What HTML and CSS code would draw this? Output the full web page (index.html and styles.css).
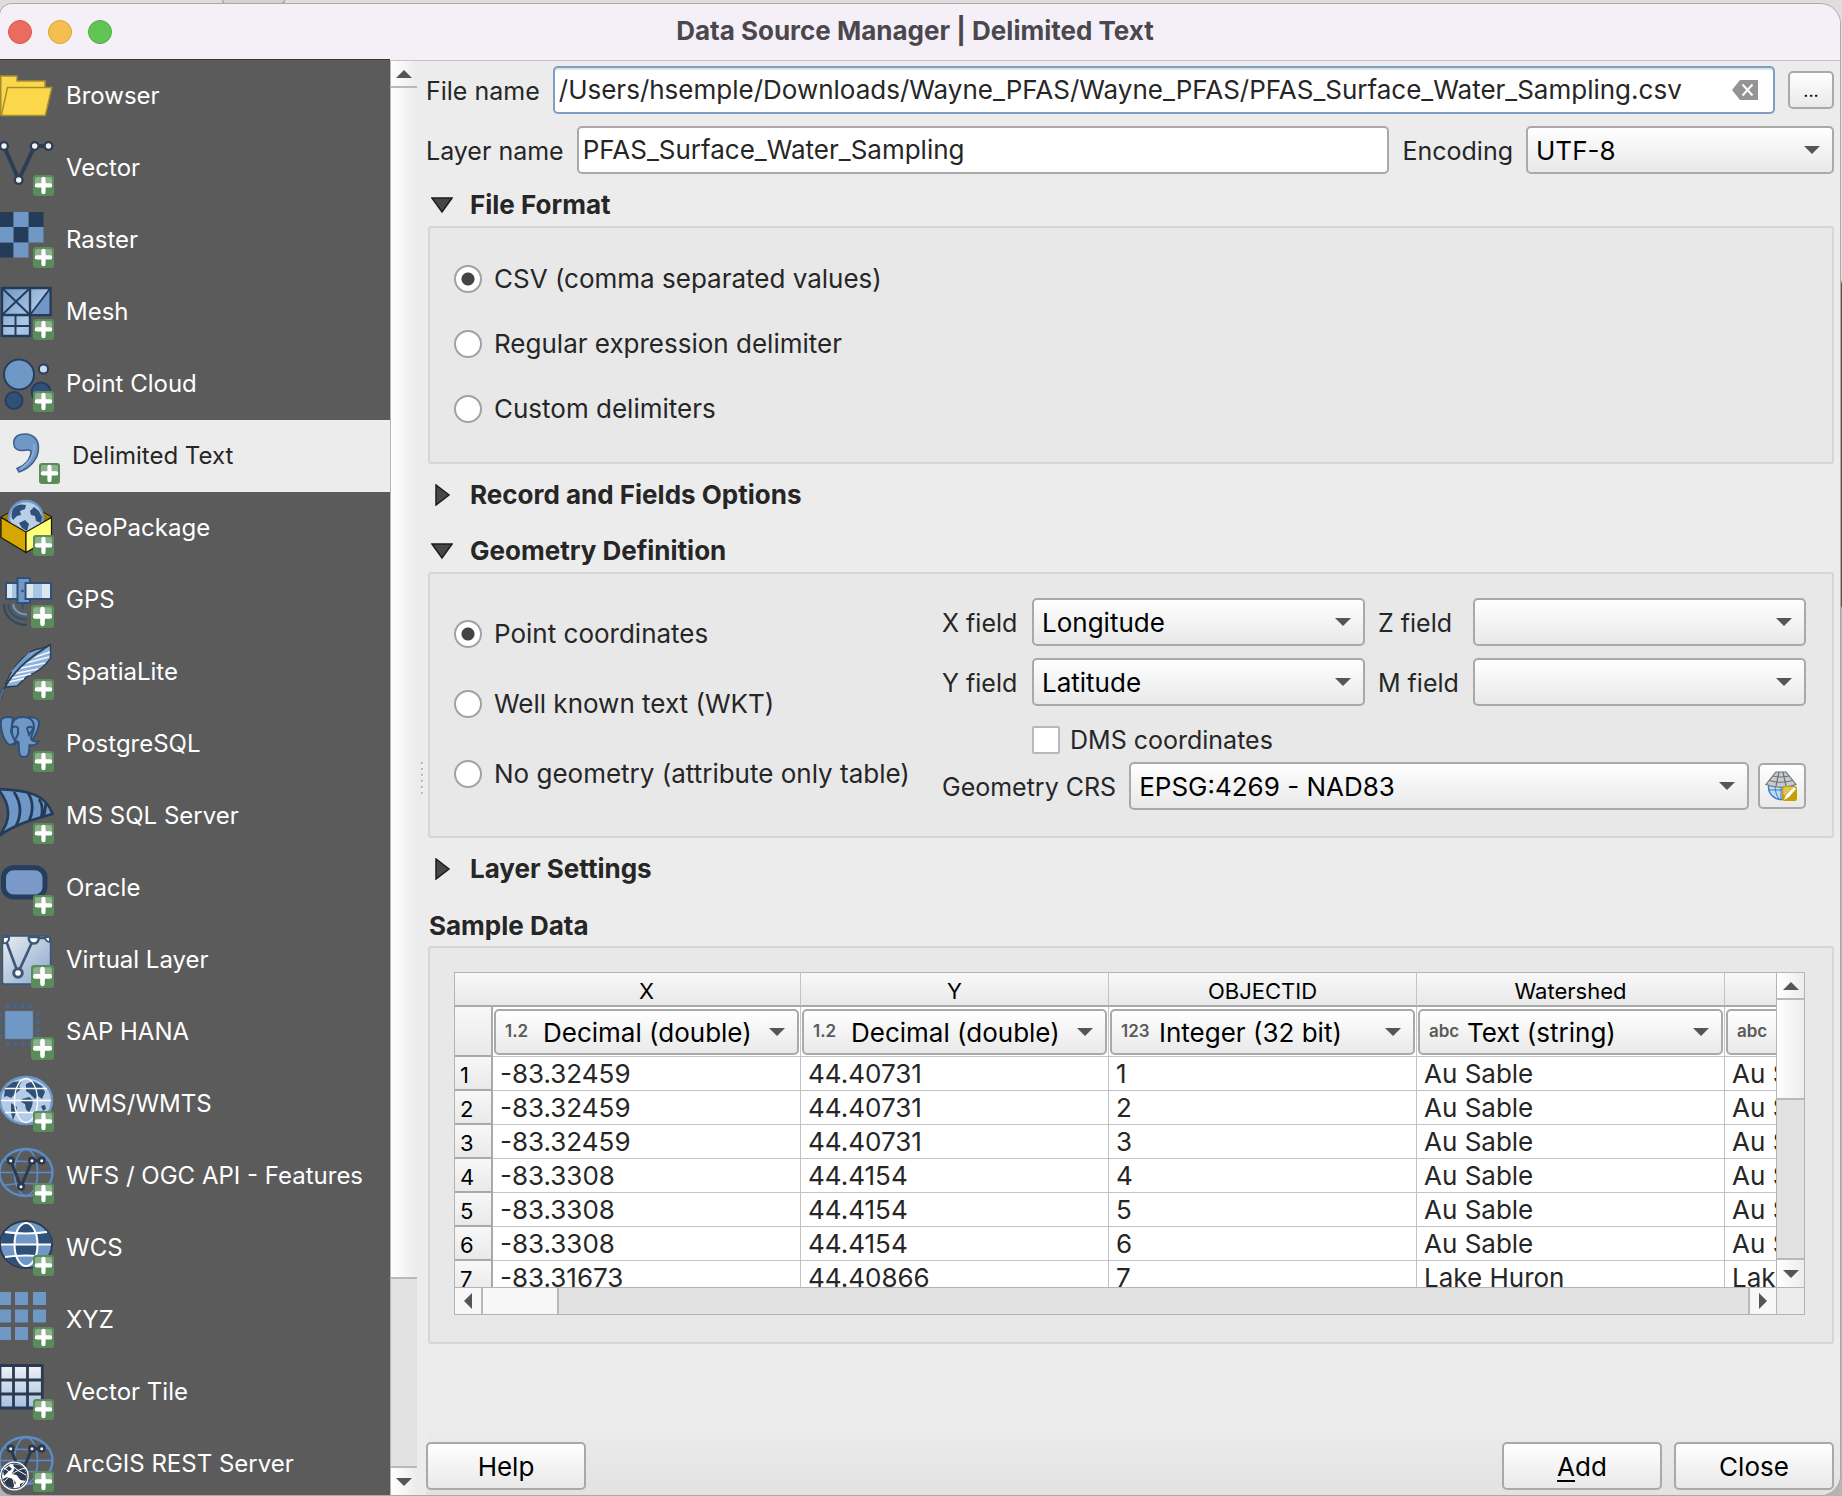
FILE: index.html
```html
<!DOCTYPE html>
<html lang="en">
<head>
<meta charset="utf-8">
<title>Data Source Manager | Delimited Text</title>
<link rel="stylesheet" href="styles.css">
</head>
<body>
<svg class="defs" aria-hidden="true">
  <defs>
    <linearGradient id="sheen" x1="0" y1="0" x2="1" y2="1"><stop offset="0" stop-color="#6f98c6"/><stop offset=".6" stop-color="#adc8e6"/><stop offset="1" stop-color="#8fb0d8"/></linearGradient>
    <linearGradient id="pale" x1="0" y1="0" x2="1" y2="1"><stop offset="0" stop-color="#ededf0"/><stop offset="1" stop-color="#86a6cd"/></linearGradient>
    <linearGradient id="fade" x1="0" y1="0" x2="0" y2="1"><stop offset="0" stop-color="#f2f2f4"/><stop offset="1" stop-color="#a5c1e3"/></linearGradient>
    <symbol id="plus" viewBox="0 0 21 21">
      <rect width="21" height="21" rx="3" fill="#5a8c5a"/>
      <path d="M2 4a2 2 0 0 1 2-2h13a2 2 0 0 1 2 2v5.500H2z" fill="#8fb08f"/>
      <path d="M10.500 3.800v13.400M3.800 10.400h13.400" stroke="#fff" stroke-width="4.200" stroke-linecap="round"/>
    </symbol>
    <symbol id="wire" viewBox="0 0 54 72">
      <g fill="none" stroke="#5a8cc8" stroke-width="1.600">
        <ellipse cx="26" cy="32.500" rx="26.500" ry="23.500" stroke-width="2.400"/>
        <ellipse cx="26" cy="32.500" rx="11.500" ry="23"/>
        <path d="M0 32.500h52M5 20q21 3 42 0M5 45q21-3 42 0"/>
      </g>
      <path d="M10.700 20.700 21 46.700 32 20.700h9.700" fill="none" stroke="#2b3a4e" stroke-width="3"/>
      <g fill="#fff" stroke="#2b3a4e" stroke-width="2.600"><circle cx="10.700" cy="20.700" r="2.800"/><circle cx="32" cy="20.700" r="2.800"/><circle cx="41.700" cy="20.700" r="2.800"/><circle cx="21" cy="46.700" r="2.800"/></g>
    </symbol>
  </defs>
</svg>
<div class="behind"><span class="behind-tab"></span></div>
<div class="window">
  <header class="titlebar">
    <div class="lights"><button class="light close" aria-label="Close window"></button><button class="light minimise" aria-label="Minimise"></button><button class="light zoom" aria-label="Zoom"></button></div>
    <h1>Data Source Manager | Delimited Text</h1>
  </header>
  <div class="body">
    <nav class="sources" aria-label="Data sources">
      <a href="#browser"><svg viewBox="0 0 54 72"><g fill="#fdd74a" stroke="#a68f30" stroke-width="1.500"><path d="M.8 55V16H17v5h28v7"/><path d="M7.500 27.500h44.300L45.300 55.500H1.300z"/></g></svg>Browser</a>
      <a href="#vector"><svg viewBox="0 0 54 72"><path d="M4 14 18.700 48 34.700 14h14" fill="none" stroke="#2b3e54" stroke-width="4"/><g fill="#f4f4f4" stroke="#2b3e54" stroke-width="2.400"><circle cx="4" cy="14" r="3.900"/><circle cx="34.700" cy="14" r="3.900"/><circle cx="48.500" cy="14" r="3.900"/><circle cx="18.700" cy="48" r="3.900"/></g><use href="#plus" x="33" y="43" width="21" height="21"/></svg>Vector</a>
      <a href="#raster"><svg viewBox="0 0 54 72"><path fill="#243c5a" d="M0 8h13.500v15H0zM28.500 8h15v15h-15zM13.500 23h15v15.500h-15zM0 38.500h13.500v15H0z"/><path fill="#6f98c6" d="M13.500 8h15v15h-15zM0 23h13.500v15.500H0zM28.500 23h15v15.500h-15zM13.500 38.500h15v15h-15z"/><use href="#plus" x="33" y="43" width="21" height="21"/></svg>Raster</a>
      <a href="#mesh"><svg viewBox="0 0 54 72"><g fill="url(#sheen)" stroke="#243c5a" stroke-width="2.400"><path d="M2 12h28v27H2zM30 12h20.500v27H30zM2 39h28v21H2z"/></g><path d="M32 38 49 14v24z" fill="#6f98c6"/><path d="M2 12l28 27M30 12 2 39M30 39 50.500 12M15.500 39v21M2 50h28" fill="none" stroke="#243c5a" stroke-width="2"/><use href="#plus" x="33" y="43" width="21" height="21"/></svg>Mesh</a>
      <a href="#pointcloud"><svg viewBox="0 0 54 72"><g stroke="#263e5e" stroke-width="2"><circle cx="19" cy="26.500" r="15" fill="#6f98c6"/><circle cx="43.500" cy="21" r="4.600" fill="#cbd9ea"/><circle cx="41" cy="44" r="9.500" fill="#2f5078"/><circle cx="14" cy="52.500" r="8.500" fill="#2f5078"/></g><use href="#plus" x="33" y="43" width="21" height="21"/></svg>Point Cloud</a>
      <a href="#delimited" class="current" aria-current="page"><svg viewBox="6 0 54 72"><path d="M25 14C17 14 13.700 18 13.700 23c0 5 3.500 7.500 8 7.500 4 0 6.500-1.500 9.300.5C31 39 25 45.500 17 48.500L19 52C31 48 38.500 38 38.500 28 38.500 19 33 14 25 14z" fill="#6f98c6" stroke="#3a5f8c" stroke-width="1.500"/><path d="M34 24c1 10-5 19-14 25" fill="none" stroke="#8fb0d8" stroke-width="1.500"/><use href="#plus" x="39" y="43" width="21" height="21"/></svg>Delimited Text</a>
      <a href="#geopackage"><svg viewBox="0 0 54 72"><path d="M1 25 10 20l16 9 17-9 9 5-26 15z" fill="#9a7c00" stroke="#1c1600"/><circle cx="26" cy="26" r="17" fill="#b9cfe8" stroke="#6f98c6" stroke-width="2.400"/><path d="M13 17c4-5 8-5 13-4l-1 4-5 2 1 4-4 1-4 4c-2-3-2-7 0-11zM34 15l5 4 3 6-1 6-5-2-1-5-4-1-1-4zM19 31l6-3 4 4-2 7-5-3z" fill="#2f5078"/><path d="M1 25.500 26 40v20.500L1 45.500z" fill="#d4a800" stroke="#1c1600" stroke-width="1.200"/><path d="M51.500 25.500 26 40v20.500l25.500-15z" fill="#ffff7a" stroke="#1c1600" stroke-width="1.200"/><use href="#plus" x="33" y="43" width="21" height="21"/></svg>GeoPackage</a>
      <a href="#gps"><svg viewBox="0 0 54 72"><path d="M6 19h12v16H6z" fill="#dde5ef" stroke="#2f5078" stroke-width="2"/><path d="M12 20h5v14h-5z" fill="#a9c4e4"/><path d="M17.500 14H30v25H17.500z" fill="#6f98c6" stroke="#2f5078" stroke-width="2"/><path d="M25.500 19H51v16H25.500z" fill="#dde5ef" stroke="#2f5078" stroke-width="2"/><path d="M33 20h9v14h-9z" fill="#a9c4e4"/><circle cx="22.500" cy="27" r="1.300" fill="#2f5078"/><path d="M22.500 39v6" stroke="#2f5078" stroke-width="2"/><g fill="none" stroke-width="2"><path d="M4 40c0 12 9 21 23 21" stroke="#32465f"/><path d="M8.500 40c0 9 7 15.500 18.500 15.500" stroke="#2f5078"/><path d="M13 40c1 6 6 10.500 14 10.500" stroke="#6f98c6"/></g><use href="#plus" x="31" y="41" width="23" height="23"/></svg>GPS</a>
      <a href="#spatialite"><svg viewBox="0 0 54 72"><path d="M50.500 8.500C44 12.500 36 13 31 15.500 20 23 11 34 5.500 48L6.500 51 17 50l10-9.500C35 37 45 31 50.500 22z" fill="#8fb3dc" stroke="#2b3e54" stroke-width="1.400"/><path d="M24 27.500 49 21M19 32.500 45 27M15 37.500 38 33M12 42 31 38M28 23.500 50 16M9 46 24 42.500" stroke="#f4f8fc" stroke-width="1.400"/><path d="M30 17 12 36M37 15 18 32M44 13 26 26" stroke="#6f98c6" stroke-width="2.400"/><path d="M50.500 8.500C33 19 14 33 4 53L.5 62" fill="none" stroke="#2b3e54" stroke-width="2"/><path d="M4 53 0 62" stroke="#4d7bb0" stroke-width="1.500"/><use href="#plus" x="33" y="43" width="21" height="21"/></svg>SpatiaLite</a>
      <a href="#postgresql"><svg viewBox="0 0 54 72"><g fill="#6f98c6" stroke="#2f5078" stroke-width="2" stroke-linejoin="round"><path d="M13 10C8 8 1 9 .8 14 .5 21 3 31 8 36c3 2 6 0 8-3L11 24z"/><path d="M27 10c5-2 12 0 12 5 0 6-3 11-6 16l-5-3z"/><path d="M12 19c0-8 5-10 11-10s11 3 11 10c0 5-3 7-3 12 2 3 5 3 8 2-2 4-7 5-9.500 4L29 44c-.5 4-2 5-5 5-4 0-5-3-5-6l-.5-9C15 34 11 29 12 19z"/></g><path d="M12 20q4-3 6 0v6l-3 6M27 20q4-3 6 1l-4 6z" fill="none" stroke="#2f5078" stroke-width="2"/><path d="M19 34l-6 3" stroke="#2f5078" stroke-width="2"/><use href="#plus" x="33" y="43" width="21" height="21"/></svg>PostgreSQL</a>
      <a href="#mssql"><svg viewBox="0 0 54 72"><path d="M-2 9C27 10 46 14 52.500 34 35 39 14 44-2 57 11 42 12 26-2 9z" fill="#6f98c6" stroke="#243c5a" stroke-width="2.600"/><path d="M14 12c8 12 7 24 2 34M28 13c6 9 5 20 1 28M39 19c4 6 4 12 2 19M46 23l-2 13" fill="none" stroke="#243c5a" stroke-width="2.800"/><use href="#plus" x="33" y="43" width="21" height="21"/></svg>MS SQL Server</a>
      <a href="#oracle"><svg viewBox="0 0 54 72"><rect x="3.500" y="15.700" width="41.500" height="29.300" rx="10" fill="#7a98c8" stroke="#263e5e" stroke-width="5"/><use href="#plus" x="33" y="43" width="21" height="21"/></svg>Oracle</a>
      <a href="#virtual"><svg viewBox="0 0 54 72"><rect x="2.500" y="12" width="48" height="48" rx="2" fill="url(#pale)" stroke="#35587f" stroke-width="1.400"/><path d="M5 14 18 49 34 14h15" fill="none" stroke="#3d5878" stroke-width="2.600"/><path d="M3 13h6a5 5 0 0 1-6 6z" fill="#fff" stroke="#3d5878" stroke-width="2"/><path d="M50 13h-5a5 5 0 0 0 5 5z" fill="#fff" stroke="#3d5878" stroke-width="2"/><path d="M29 13a5 5 0 1 0 9.500 0z" fill="#fff" stroke="#3d5878" stroke-width="2.600"/><circle cx="18" cy="49" r="4.300" fill="#fff" stroke="#3d5878" stroke-width="3"/><use href="#plus" x="31" y="41" width="23" height="23"/></svg>Virtual Layer</a>
      <a href="#saphana"><svg viewBox="0 0 54 72"><path d="M5 15h28v28H5z" fill="#6f98c6" stroke="#5b7da6" stroke-width=".6"/><path d="M5.700 10H33M5.700 48H33" stroke="#46648c" stroke-width="4" stroke-dasharray="4 3.500"/><path d="M38 16.200V43M0 16.200V43" stroke="#46648c" stroke-width="4" stroke-dasharray="4 3.500"/><use href="#plus" x="31" y="41" width="23" height="23"/></svg>SAP HANA</a>
      <a href="#wms"><svg viewBox="0 0 54 72"><ellipse cx="26" cy="32.500" rx="26" ry="23.500" fill="#b4cbe6" stroke="#6f98c6" stroke-width="2.400"/><path d="M5 20l8-6 9-1-3 5 2 3-6 5-4 4-4-2-3 1zM11 35l6 4-2 8-2 5-2-7zM26 16l7-3 9 5 3 6-3 7-4-3-3 3-6-6-3-2zM22 31l7-2 4 3-1 6-3 7-3-4-1-5-4-2zM41 38l4-1 1 4-3 2z" fill="#2f5078"/><g fill="none" stroke="#fff" stroke-width="1.300"><ellipse cx="26" cy="32.500" rx="11.500" ry="22"/><path d="M1 32.500h50M5 20.500h42M5 44.500h42"/></g><use href="#plus" x="33" y="43" width="21" height="21"/></svg>WMS/WMTS</a>
      <a href="#wfs"><svg viewBox="0 0 54 72"><use href="#wire" width="54" height="72"/><use href="#plus" x="33" y="43" width="21" height="21"/></svg>WFS / OGC API - Features</a>
      <a href="#wcs"><svg viewBox="0 0 54 72"><ellipse cx="26" cy="32.500" rx="26" ry="23.500" fill="#6f98c6" stroke="#2b3a4e" stroke-width="2"/><path d="M4 21q6 1 12 1-1 5-1 10.500H1q0-6 3-11.500zM37 21l11-1q4 6 4 12.500H38zM16 21q4-11 10-11 7 0 11 11-10 2-21 0zM15 33h23q0 6-2 11H17q-2-5-2-11zM5 45h12q3 8 7 10Q12 54 5 45z" fill="#2f5078"/><g fill="none" stroke="#fff" stroke-width="2"><ellipse cx="26" cy="32.500" rx="11.500" ry="21.500"/><path d="M1 32.500h50M5 20q21 3 42 0M5 45q21-3 42 0"/></g><use href="#plus" x="33" y="43" width="21" height="21"/></svg>WCS</a>
      <a href="#xyz"><svg viewBox="0 0 54 72"><path d="M0 8h11v13H0zM15 8h13v13H15zM33 8h13v13H33zM0 25.500h11v13H0zM15 25.500h13v13H15zM33 25.500h13v13H33zM0 43h11v13H0zM15 43h13v13H15z" fill="#6f98c6"/><use href="#plus" x="33" y="43" width="21" height="21"/></svg>XYZ</a>
      <a href="#vectortile"><svg viewBox="0 0 54 72"><path d="M0 9h42.500v43H0z" fill="url(#fade)"/><path d="M0 9.500h43.500M0 24h42M0 38h42M0 52h43.500M13.500 9v43M27.500 9v43M42.300 9v43M0 9v43" stroke="#2b3a4e" stroke-width="2.800"/><use href="#plus" x="33" y="43" width="21" height="21"/></svg>Vector Tile</a>
      <a href="#arcgis"><svg viewBox="0 0 54 72"><use href="#wire" width="54" height="72"/><circle cx="14.300" cy="48" r="14.500" fill="#fff"/><circle cx="14.300" cy="48" r="12.800" fill="#fff" stroke="#2b3a4e" stroke-width="1"/><path d="M13 36.500c7-1 13 4 13.500 10.500l-1 6-5-1-4-5-5-1 3-5zM3 43l6-5 3 3-4 3-4 4zM3 51l4-2 6 2 3 4-3 5c-5 0-9-4-10-9zM20 56l4-2-4 5z" fill="#2b3a4e"/><path d="M4 40q9 4 11 20M25 40q-11 2-21 14M10 36q9 8 16 11" fill="none" stroke="#fff" stroke-width="1"/><use href="#plus" x="33" y="43" width="21" height="21"/></svg>ArcGIS REST Server</a>
    </nav>
    <div class="vbar side-bar" aria-hidden="true"><span class="step"><i class="tri up"></i></span><span class="thumb"></span><span class="groove"></span><span class="step"><i class="tri down"></i></span></div>
    <div class="splitter" aria-hidden="true"><i></i><i></i><i></i><i></i><i></i><i></i></div>
    <main class="panel">
      <div class="row file-row">
        <label for="file">File name</label>
        <div class="clearable"><input class="field focused" id="file" type="text" value="/Users/hsemple/Downloads/Wayne_PFAS/Wayne_PFAS/PFAS_Surface_Water_Sampling.csv"><button class="clear" aria-label="Clear"><svg viewBox="0 0 26 20"><path d="M8 0h18v20H8L0 10z" fill="#949494"/><path d="m10.500 4.500 10 11m0-11-10 11" stroke="#fff" stroke-width="2"/></svg></button></div>
        <button class="push browse">...</button>
      </div>
      <div class="row">
        <label for="layer">Layer name</label>
        <input class="field" id="layer" type="text" value="PFAS_Surface_Water_Sampling">
        <label for="enc">Encoding</label>
        <span class="combo encoding"><select id="enc"><option>UTF-8</option></select></span>
      </div>
      <h2><button class="toggle" aria-expanded="true"><svg viewBox="0 0 22 22"><path d="M1 4h20L11 18z" fill="#474747" stroke="#1d1d1d" stroke-width="1.500"/></svg>File Format</button></h2>
      <section class="group format">
        <label class="radio"><input type="radio" name="format" checked>CSV (comma separated values)</label>
        <label class="radio"><input type="radio" name="format">Regular expression delimiter</label>
        <label class="radio"><input type="radio" name="format">Custom delimiters</label>
      </section>
      <h2><button class="toggle" aria-expanded="false"><svg viewBox="0 0 22 22"><path d="M5 1v20L18 11z" fill="#474747" stroke="#1d1d1d" stroke-width="1.500"/></svg>Record and Fields Options</button></h2>
      <h2 class="follows"><button class="toggle" aria-expanded="true"><svg viewBox="0 0 22 22"><path d="M1 4h20L11 18z" fill="#474747" stroke="#1d1d1d" stroke-width="1.500"/></svg>Geometry Definition</button></h2>
      <section class="group geometry">
        <div class="kinds">
          <label class="radio"><input type="radio" name="geom" checked>Point coordinates</label>
          <label class="radio"><input type="radio" name="geom">Well known text (WKT)</label>
          <label class="radio"><input type="radio" name="geom">No geometry (attribute only table)</label>
        </div>
        <div class="coords">
          <div class="axes">
            <label for="xf">X field</label><span class="combo"><select id="xf"><option>Longitude</option></select></span>
            <label for="zf">Z field</label><span class="combo"><select id="zf"><option></option></select></span>
            <label for="yf">Y field</label><span class="combo"><select id="yf"><option>Latitude</option></select></span>
            <label for="mf">M field</label><span class="combo"><select id="mf"><option></option></select></span>
          </div>
          <label class="check"><input type="checkbox">DMS coordinates</label>
          <div class="row crs">
            <label for="crs">Geometry CRS</label>
            <span class="combo"><select id="crs"><option>EPSG:4269 - NAD83</option></select></span>
            <button class="push pick" aria-label="Select CRS"><svg viewBox="0 0 34 32"><circle cx="16" cy="17" r="12.500" fill="#b9dcf7" stroke="#3f7cc0" stroke-width="1.400"/><path d="M4 20h24M16 14v15M10 14q0 10 4 15M22 14q0 10-4 15" fill="none" stroke="#3f7cc0"/><path d="M11 2h10l10 12.500Q16 20 1 14.500z" fill="#c9ccce" stroke="#6f7274" stroke-width="1.200"/><path d="M8 6q8 2 16 0M4.500 10.500q11.500 3.500 23 0M14 2l-3 14M18 2l3 14" fill="none" stroke="#6f7274" stroke-width="1.200"/><rect x="17" y="16" width="15" height="15" rx="2.500" fill="#c4a000"/><path d="M18 20a3 3 0 0 1 3-3h8L19 26z" fill="#dcc55a"/><path d="m19 30 2-5 8-8 2 2-7 8z" fill="#fff"/></svg></button>
          </div>
        </div>
      </section>
      <h2><button class="toggle" aria-expanded="false"><svg viewBox="0 0 22 22"><path d="M5 1v20L18 11z" fill="#474747" stroke="#1d1d1d" stroke-width="1.500"/></svg>Layer Settings</button></h2>
      <h2 class="follows plain">Sample Data</h2>
      <section class="group sample">
        <div class="grid-frame">
          <div class="viewport">
            <table>
              <colgroup><col class="gutter"><col><col><col><col><col></colgroup>
              <thead>
                <tr class="names"><td></td><th>X</th><th>Y</th><th>OBJECTID</th><th>Watershed</th><th></th></tr>
                <tr class="types"><td></td>
                  <td><span class="combo typed"><span class="kind">1.2</span><select aria-label="X type"><option>Decimal (double)</option></select></span></td>
                  <td><span class="combo typed"><span class="kind">1.2</span><select aria-label="Y type"><option>Decimal (double)</option></select></span></td>
                  <td><span class="combo typed"><span class="kind">123</span><select aria-label="OBJECTID type"><option>Integer (32 bit)</option></select></span></td>
                  <td><span class="combo typed"><span class="kind">abc</span><select aria-label="Watershed type"><option>Text (string)</option></select></span></td>
                  <td><span class="combo typed"><span class="kind">abc</span><select aria-label="Type"><option></option></select></span></td></tr>
              </thead>
              <tbody>
                <tr><th>1</th><td>-83.32459</td><td>44.40731</td><td>1</td><td>Au Sable</td><td>Au Sable</td></tr>
                <tr><th>2</th><td>-83.32459</td><td>44.40731</td><td>2</td><td>Au Sable</td><td>Au Sable</td></tr>
                <tr><th>3</th><td>-83.32459</td><td>44.40731</td><td>3</td><td>Au Sable</td><td>Au Sable</td></tr>
                <tr><th>4</th><td>-83.3308</td><td>44.4154</td><td>4</td><td>Au Sable</td><td>Au Sable</td></tr>
                <tr><th>5</th><td>-83.3308</td><td>44.4154</td><td>5</td><td>Au Sable</td><td>Au Sable</td></tr>
                <tr><th>6</th><td>-83.3308</td><td>44.4154</td><td>6</td><td>Au Sable</td><td>Au Sable</td></tr>
                <tr><th>7</th><td>-83.31673</td><td>44.40866</td><td>7</td><td>Lake Huron</td><td>Lake Huron</td></tr>
              </tbody>
            </table>
          </div>
          <div class="vbar" aria-hidden="true"><span class="step"><i class="tri up"></i></span><span class="thumb"></span><span class="groove"></span><span class="step"><i class="tri down"></i></span></div>
          <div class="hbar" aria-hidden="true"><span class="step"><i class="tri left"></i></span><span class="thumb"></span><span class="groove"></span><span class="step last"><i class="tri right"></i></span></div>
          <div class="corner"></div>
        </div>
      </section>
      <footer class="actions"><button class="push">Help</button><button class="push add"><span class="mnemonic">A</span>dd</button><button class="push">Close</button></footer>
    </main>
  </div>
</div>
</body>
</html>
```
FILE: styles.css
```css
* { box-sizing: border-box; }
body {
  margin: 0;
  height: 100vh;
  display: flex;
  flex-direction: column;
  padding: 0 2px 1px 0;
  overflow: hidden;
  background: linear-gradient(#dedede 280px, #6d4c41 284px, #6d4c41 606px, #b4b4b4 608px);
  font: 24px/32px Inter, "Noto Sans", sans-serif;
  color: #262626;
}
.defs { position: absolute; width: 0; height: 0; }
.behind { height: 4px; flex: none; display: flex; background: #dedede; margin-right: -2px; }
.behind-tab { width: 63px; height: 4px; margin-left: 222px; background: #d2d2d2; border: 1px solid #999; border-top: 0; border-radius: 0 0 4px 4px; }
.window {
  flex: 1;
  min-height: 0;
  display: flex;
  flex-direction: column;
  overflow: hidden;
  background: #ececec;
  border-radius: 12px 20px 20px 12px;
  box-shadow: 0 0 0 1px #a9a9a9;
}
.titlebar {
  height: 57px;
  flex: none;
  position: relative;
  display: flex;
  align-items: center;
  justify-content: center;
  background: #f5f0f8;
  border-bottom: 1px solid #c4c1c7;
  padding: 0 10px 2px 0;
}
.lights { position: absolute; left: 8px; top: 16px; display: flex; gap: 16px; }
.light { width: 24px; height: 24px; padding: 0; border-radius: 50%; border: 1px solid; }
.close { background: #ed6a5e; border-color: #d5584d; }
.minimise { background: #f5bf4f; border-color: #d9a33c; }
.zoom { background: #61c554; border-color: #4dac40; }
h1 { margin: 0; font-size: 26px; font-weight: 700; color: #4a484c; }
.body { flex: 1; min-height: 0; display: flex; }

.sources { width: 390px; flex: none; overflow: hidden; background: #5b5b5b; border-top: 1px solid #38383c; margin-top: -2px; position: relative; }
.sources a { display: flex; align-items: center; gap: 12px; height: 72px; color: #fff; text-decoration: none; white-space: nowrap; }
.sources svg { width: 54px; height: 72px; flex: none; }
.sources .current { background: #ececec; color: #262626; padding-left: 6px; }

.vbar { display: flex; flex-direction: column; border-left: 1px solid #b4b4b4; background: #e2e2e2; }
.vbar .thumb, .vbar .step { background: linear-gradient(90deg, #fff, #ececec); }
.step { display: flex; align-items: center; justify-content: center; flex: none; }
.vbar .step { height: 27px; border-bottom: 2px solid #b9b9b9; }
.vbar .step:last-child { border-bottom: 0; border-top: 2px solid #b9b9b9; height: 29px; }
.vbar .thumb { flex: 98; border-bottom: 2px solid #b9b9b9; }
.vbar .groove { flex: 159; }
.side-bar { width: 27px; flex: none; }
.side-bar .thumb { flex: 1192; }
.side-bar .groove { flex: 188; }
.tri { width: 0; height: 0; border: 8px solid transparent; }
.up { border-top: 0; border-bottom-color: #555; }
.down { border-bottom: 0; border-top-color: #555; }
.left { border-left: 0; border-right-color: #555; }
.right { border-right: 0; border-left-color: #555; }

.splitter { width: 9px; flex: none; display: flex; flex-direction: column; justify-content: center; align-items: center; gap: 4px; }
.splitter i { width: 2px; height: 2px; background: #b9b9b9; box-shadow: 1px 1px #f8f8f8; }

.panel { flex: 1; min-width: 0; display: flex; flex-direction: column; padding: 5px 6px 5px 0; background: linear-gradient(#ececec 95%, #e2e2e2); }
.row { display: flex; align-items: center; gap: 13px; }
.file-row { margin-bottom: 12px; }
label { white-space: nowrap; font-size: 25px; padding-top: 2px; }
.clearable { flex: 1; position: relative; display: flex; }
.clear { position: absolute; right: 17px; top: 14px; width: 26px; height: 20px; padding: 0; border: 0; background: none; }
.clear svg { display: block; width: 26px; height: 20px; }
.field {
  flex: 1;
  min-width: 0;
  height: 48px;
  padding: 0 4px 1px;
  font: inherit;
  font-size: 26px;
  color: inherit;
  background: #fff;
  border: 2px solid #a9a9a9;
  border-radius: 5px;
  outline: 0;
}
.focused { border-color: #7f9fc2; box-shadow: inset 0 2px #dde3ea; }
.push, .combo select {
  font: inherit;
  font-size: 26px;
  color: #000;
  background: linear-gradient(#fff, #e9e9e9);
  border: 2px solid #a9a9a9;
  border-radius: 5px;
}
.push { width: 160px; height: 48px; padding: 1px 0 0; }
.browse { width: 46px; height: 38px; font-size: 18px; line-height: 24px; }
.combo { position: relative; display: flex; flex: 1; min-width: 0; }
.combo select { appearance: none; width: 100%; height: 48px; padding: 2px 40px 0 8px; outline: 0; }
.combo::after {
  content: "";
  position: absolute;
  right: 14px;
  top: 20px;
  border: 8px solid transparent;
  border-top-color: #555;
  border-bottom: 0;
  pointer-events: none;
}
.encoding { flex: none; width: 308px; }

h2 { margin: 10px 0 0; height: 42px; display: flex; align-items: center; font-size: 26px; font-weight: 700; flex: none; }
.follows { margin-top: 14px; }
.plain { padding: 1px 0 0 3px; }
.toggle { display: flex; align-items: center; gap: 17px; padding: 0 0 0 5px; border: 0; background: none; font: inherit; color: inherit; }
.toggle svg { width: 22px; height: 22px; }

.group { margin-left: 2px; background: #e8e8e8; border: 2px solid #d6d6d6; border-radius: 3px; }
.format, .kinds { display: flex; flex-direction: column; }
.format { gap: 37px; padding: 37px 24px 39px; }
.radio, .check { display: flex; align-items: center; gap: 12px; height: 28px; padding: 0; }
.radio { font-size: 26px; }
.radio input, .check input { appearance: none; width: 28px; height: 28px; flex: none; margin: 0; background: #fff; border: 2px solid #a2a2a2; border-radius: 50%; }
.radio input:checked { background: radial-gradient(circle, #444 6px, #fff 7px); }
.check input { border-color: #b9b9b9; border-radius: 2px; }

.geometry { display: grid; grid-template-columns: 488px 1fr; padding: 24px 26px 26px 24px; }
.kinds { gap: 42px; padding-top: 22px; }
.axes { display: grid; grid-template-columns: 77px 1fr 82px 1fr; gap: 12px 13px; align-items: center; }
.check { height: 56px; padding: 12px 0 0 90px; gap: 10px; }
.crs .pick { width: 48px; height: 46px; margin-left: -4px; padding: 0; }
.pick svg { display: block; width: 34px; height: 32px; margin: 0 auto; }

.sample { padding: 24px 27px 27px 24px; }
.grid-frame { display: grid; grid-template-columns: 1fr 28px; grid-template-rows: 314px 27px; border: 1px solid #b4b4b4; background: #fff; }
.viewport { overflow: hidden; }
table { border-collapse: separate; border-spacing: 0; table-layout: fixed; width: 1578px; line-height: 32px; }
col { width: 308px; }
.gutter { width: 38px; }
td, th { height: 34px; padding: 1px 0 0 7px; border-right: 1px solid #c3c3c3; border-bottom: 1px solid #c3c3c3; text-align: left; white-space: nowrap; }
td { font-size: 26px; }
th, .names td, .types td:first-child { font-size: 22px; font-weight: 400; color: #000; background: linear-gradient(#f8f8f8, #e9e9e9); border-color: #a9a9a9; }
.names th { text-align: center; border-right-color: #c3c3c3; }
.names th, .names td { border-bottom-width: 2px; padding: 3px 0 0; line-height: 28px; }
.names td { border-right: 0; }
tbody th { padding: 4px 0 0 5px; line-height: 28px; border-right-width: 2px; border-bottom-width: 2px; }
.types td { height: 50px; padding: 1px; }
.types td:first-child { border-right-width: 2px; border-bottom-width: 2px; }
.typed select { padding-left: 47px; padding-right: 30px; height: 46px; }
.kind { position: absolute; left: 11px; top: 6px; font-size: 17px; font-weight: 600; color: #5a5a5a; pointer-events: none; }
.typed::after { top: 19px; }
.hbar { display: flex; border-top: 1px solid #b4b4b4; background: #e2e2e2; }
.hbar .step, .hbar .thumb { background: #f7f7f7; border-right: 2px solid #b9b9b9; }
.hbar .step { width: 28px; }
.hbar .thumb { width: 76px; }
.hbar .groove { flex: 1; }
.hbar .last { border-right: 0; border-left: 2px solid #b9b9b9; }
.corner { border: 1px solid #b4b4b4; border-width: 1px 0 0 1px; background: #ececec; }

.actions { margin-top: auto; display: flex; gap: 12px; }
.add { margin-left: auto; }
.mnemonic { text-decoration: underline; text-underline-offset: 4px; text-decoration-thickness: 2px; }
```
